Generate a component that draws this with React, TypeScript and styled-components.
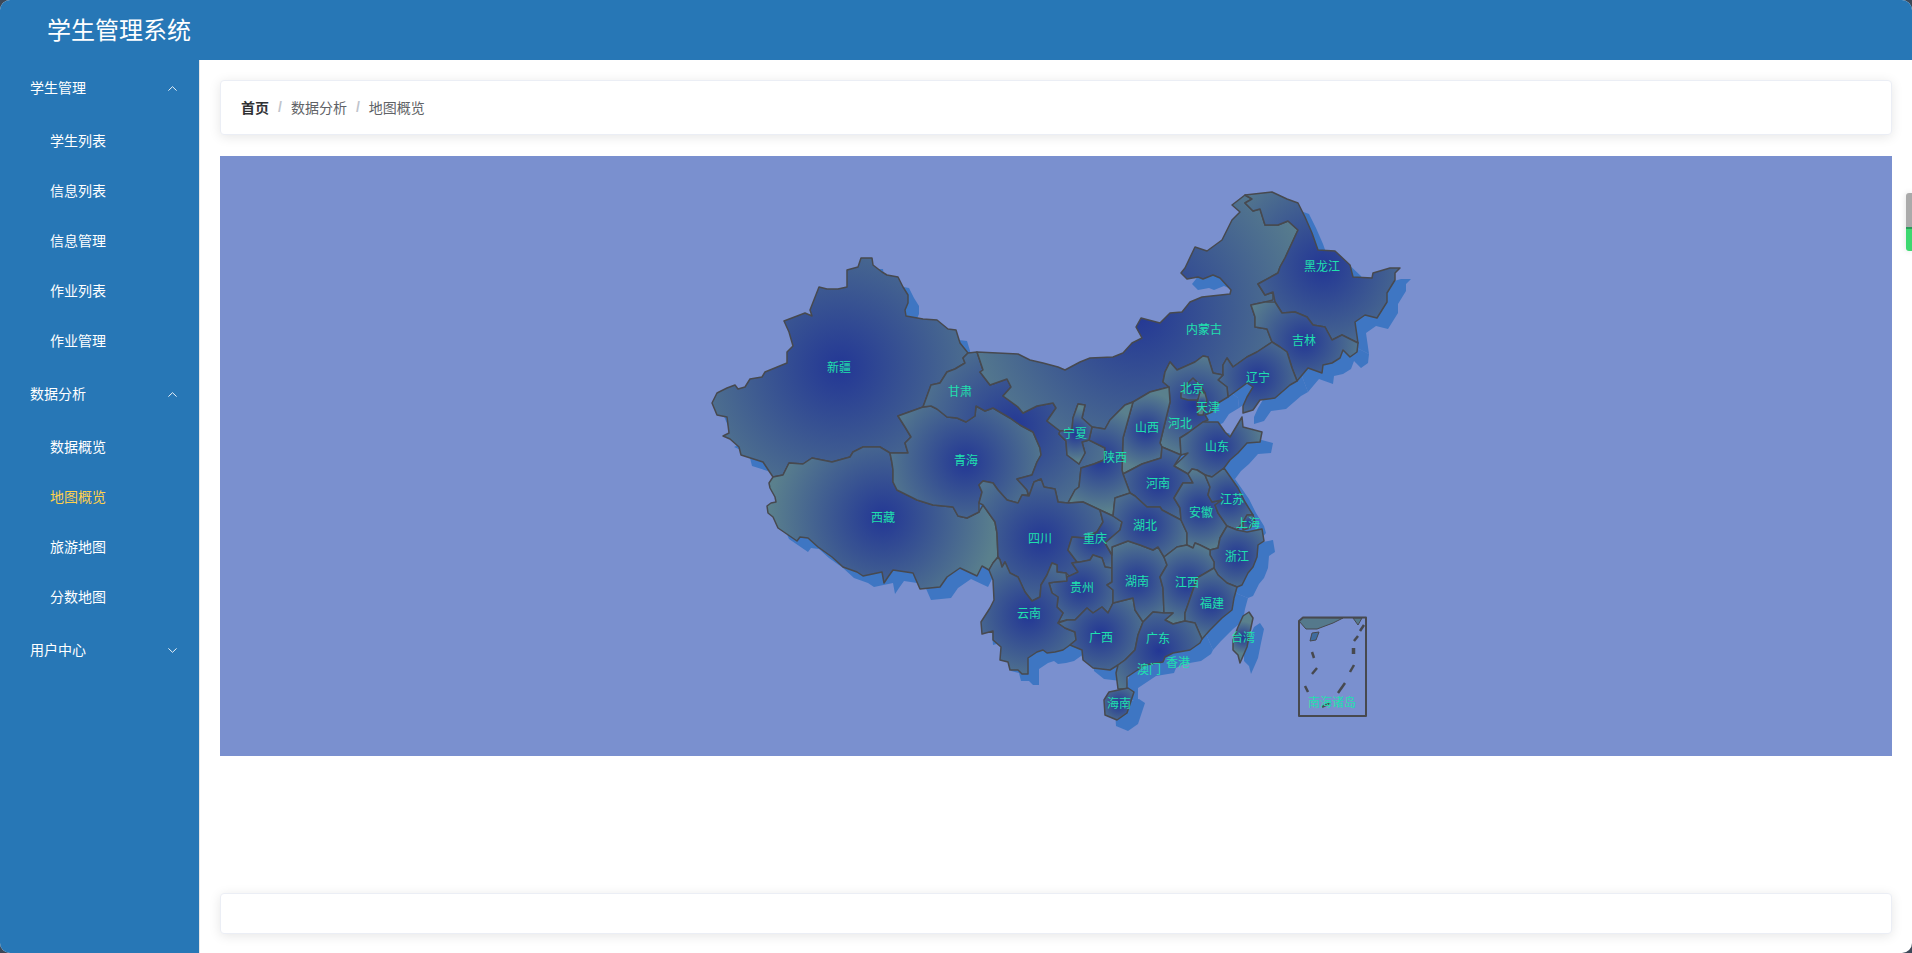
import React, { FC } from 'react'
import styled, { createGlobalStyle } from 'styled-components'

// * ------------------------------------------------------------------------------- data

const provinces: { name: string; points: string }[] = [
  { name: '新疆', points: '861,258 872,258 873,265 882,272 887,275 898,277 903,287 908,295 908,303 905,310 906,316 923,319 937,320 948,329 956,330 960,343 968,353 963,358 965,363 955,369 947,372 940,383 931,385 923,407 898,416 905,427 911,437 905,443 908,453 890,453 880,447 863,447 853,452 850,457 832,462 812,458 803,464 789,463 783,475 773,477 763,462 741,455 739,447 730,439 723,436 729,433 727,417 717,415 712,403 717,393 727,388 735,385 738,389 745,387 750,379 762,377 765,372 787,363 787,352 793,346 789,332 784,321 805,313 812,316 810,310 819,287 827,289 838,289 847,287 847,270 858,267' },
  { name: '西藏', points: '769,483 773,477 783,475 789,463 803,464 812,458 832,462 850,457 853,452 863,447 880,447 890,453 892,463 893,470 893,482 897,490 917,500 933,505 953,507 958,516 967,518 979,512 983,505 995,522 997,533 998,557 993,563 989,570 982,566 977,576 960,568 947,577 940,587 920,589 913,573 893,570 888,577 884,583 882,572 863,576 857,572 843,567 832,557 818,547 808,538 800,537 797,541 778,528 773,517 768,513 767,506 771,503 776,502 775,497 770,488' },
  { name: '青海', points: '890,453 908,453 905,443 911,437 905,427 898,416 923,407 931,406 937,409 947,417 957,418 966,422 975,416 976,406 985,411 993,408 1010,418 1020,425 1033,432 1040,448 1041,455 1037,462 1032,475 1017,479 1027,490 1028,495 1022,495 1018,503 1007,500 998,490 993,483 983,481 979,485 982,492 979,503 979,512 967,518 958,516 953,507 933,505 917,500 897,490 893,482 893,470 892,463' },
  { name: '甘肃', points: '968,353 977,352 983,370 980,372 990,385 1007,379 1011,387 1003,396 1018,407 1023,413 1037,406 1053,403 1056,408 1047,421 1060,431 1059,434 1066,441 1067,455 1079,464 1085,453 1082,442 1089,440 1105,448 1104,460 1094,464 1081,468 1079,487 1075,490 1068,503 1058,502 1055,489 1044,487 1041,479 1034,482 1029,496 1027,490 1017,479 1032,475 1037,462 1041,455 1040,448 1033,432 1020,425 1010,418 993,408 985,411 976,406 975,416 966,422 957,418 947,417 937,409 931,406 923,407 931,385 940,383 947,372 955,369 965,363 963,358' },
  { name: '内蒙古', points: '977,352 1018,354 1030,360 1043,363 1058,367 1065,370 1080,362 1090,358 1113,357 1123,353 1132,343 1142,338 1136,327 1141,318 1160,323 1170,313 1182,312 1190,302 1202,297 1230,294 1231,290 1220,278 1213,275 1203,279 1198,277 1187,279 1181,273 1185,268 1195,247 1207,251 1222,240 1232,220 1240,212 1232,205 1245,195 1252,199 1245,203 1253,211 1260,209 1265,225 1278,225 1288,221 1298,230 1285,258 1280,267 1278,273 1258,284 1265,295 1273,292 1273,300 1265,302 1251,305 1255,317 1255,327 1267,329 1272,342 1257,352 1247,357 1233,367 1227,358 1223,365 1223,375 1213,373 1208,357 1203,356 1195,362 1177,370 1170,362 1165,372 1163,382 1169,387 1150,392 1133,402 1125,405 1110,420 1105,429 1092,427 1082,418 1085,405 1078,404 1073,418 1072,430 1060,431 1047,421 1056,408 1053,403 1037,406 1023,413 1018,407 1003,396 1011,387 1007,379 990,385 980,372 983,370' },
  { name: '黑龙江', points: '1245,195 1272,192 1287,199 1298,203 1305,217 1312,233 1318,250 1335,251 1350,265 1353,277 1372,278 1373,273 1390,268 1400,268 1395,273 1395,280 1387,293 1387,302 1377,318 1365,315 1355,322 1358,343 1342,335 1332,340 1325,327 1313,325 1307,317 1295,312 1282,313 1275,302 1273,292 1265,295 1258,284 1278,273 1280,267 1285,258 1298,230 1288,221 1278,225 1265,225 1260,209 1253,211 1245,203 1252,199' },
  { name: '吉林', points: '1251,305 1265,302 1275,302 1282,313 1295,312 1307,317 1313,325 1325,327 1332,340 1342,335 1358,343 1357,352 1350,357 1343,350 1340,358 1332,363 1323,365 1322,373 1308,368 1297,381 1292,368 1287,352 1280,347 1272,342 1267,329 1255,327 1255,317' },
  { name: '辽宁', points: '1272,342 1280,347 1287,352 1292,368 1297,381 1290,385 1275,398 1260,400 1253,410 1243,413 1243,406 1247,397 1253,387 1247,383 1228,397 1227,387 1218,380 1223,375 1223,365 1227,358 1233,367 1247,357 1257,352' },
  { name: '河北', points: '1165,372 1170,362 1177,370 1195,362 1203,356 1208,357 1213,373 1223,375 1218,380 1227,387 1228,397 1218,403 1212,412 1205,415 1208,420 1203,422 1188,433 1180,438 1181,455 1162,447 1160,443 1170,402 1169,387 1163,382' },
  { name: '北京', points: '1181,392 1188,383 1193,378 1200,385 1205,393 1197,400 1188,400 1181,398' },
  { name: '天津', points: '1200,392 1205,393 1207,400 1203,415 1198,415 1197,403' },
  { name: '山西', points: '1169,387 1170,402 1160,443 1162,447 1161,458 1142,464 1123,474 1122,470 1123,438 1133,402 1150,392' },
  { name: '山东', points: '1188,433 1203,422 1218,422 1225,432 1230,437 1242,417 1243,427 1262,432 1260,442 1247,443 1238,453 1230,460 1224,468 1212,477 1205,475 1197,470 1192,469 1188,474 1174,466 1188,453 1181,455 1180,438' },
  { name: '河南', points: '1123,474 1142,464 1161,458 1162,447 1181,455 1174,466 1188,474 1193,483 1183,483 1174,498 1180,508 1181,520 1162,510 1160,507 1147,507 1135,496 1130,493' },
  { name: '陕西', points: '1133,402 1125,405 1110,420 1105,429 1092,427 1089,440 1105,448 1104,460 1094,464 1081,468 1079,487 1075,490 1068,503 1083,502 1100,510 1113,516 1115,498 1130,493 1123,474 1122,470 1123,438' },
  { name: '宁夏', points: '1078,404 1085,405 1082,418 1092,427 1089,440 1082,442 1085,453 1079,464 1067,455 1066,441 1059,434 1060,431 1072,430 1073,418' },
  { name: '四川', points: '979,503 982,492 979,485 983,481 993,483 998,490 1007,500 1018,503 1022,495 1029,496 1034,482 1041,479 1044,487 1055,489 1058,502 1068,503 1083,502 1100,510 1103,522 1097,532 1085,538 1072,537 1068,550 1077,562 1072,563 1078,572 1070,577 1066,573 1057,572 1057,565 1052,563 1047,575 1041,585 1040,597 1032,601 1025,592 1018,577 1010,573 1005,562 1002,567 1000,560 998,557 997,533 995,522 983,505' },
  { name: '重庆', points: '1100,510 1113,516 1122,522 1120,530 1105,543 1112,555 1112,568 1105,567 1102,558 1093,555 1090,560 1080,562 1077,562 1068,550 1072,537 1085,538 1097,532 1103,522' },
  { name: '贵州', points: '1049,583 1052,593 1058,597 1057,607 1063,613 1058,622 1067,620 1075,620 1087,608 1093,613 1102,607 1108,613 1113,603 1113,590 1107,585 1112,582 1112,568 1105,567 1102,558 1093,555 1090,560 1080,562 1072,563 1078,572 1067,577 1066,581 1055,582' },
  { name: '云南', points: '998,557 1000,560 1002,567 1005,562 1010,573 1018,577 1025,592 1032,601 1040,597 1041,585 1047,575 1052,563 1057,565 1057,572 1066,573 1067,581 1055,582 1049,583 1052,593 1058,597 1057,607 1063,613 1058,623 1065,628 1075,632 1076,640 1070,645 1063,650 1055,652 1047,653 1043,650 1037,652 1028,658 1028,674 1022,674 1018,670 1010,670 1008,662 1000,660 1001,647 993,640 993,631 982,634 981,622 990,608 994,600 993,580 989,570 993,563' },
  { name: '广西', points: '1058,623 1067,620 1075,620 1087,608 1093,613 1102,607 1108,613 1113,603 1125,600 1133,598 1135,610 1143,622 1138,635 1135,650 1125,660 1118,665 1110,670 1093,668 1083,660 1082,650 1070,645 1076,640 1075,632 1065,628' },
  { name: '湖南', points: '1112,555 1112,547 1128,541 1140,545 1153,550 1158,547 1164,557 1167,565 1160,577 1163,588 1164,613 1153,612 1143,622 1135,610 1133,598 1125,600 1113,603 1113,590 1107,585 1112,582 1112,568' },
  { name: '湖北', points: '1113,516 1115,498 1130,493 1135,496 1147,507 1160,507 1162,510 1181,520 1187,533 1187,545 1177,547 1164,557 1158,547 1153,550 1140,545 1128,541 1112,547 1112,555 1105,543 1120,530 1122,522' },
  { name: '安徽', points: '1192,469 1197,470 1205,475 1210,487 1208,495 1212,502 1222,500 1215,505 1218,513 1227,526 1220,538 1218,548 1210,550 1200,545 1195,543 1193,548 1187,545 1187,533 1181,520 1180,508 1174,498 1183,483 1193,483 1188,474' },
  { name: '江苏', points: '1205,475 1212,477 1224,468 1238,488 1245,502 1253,515 1247,515 1243,522 1237,530 1227,526 1218,513 1215,505 1222,500 1212,502 1208,495 1210,487' },
  { name: '上海', points: '1247,515 1253,515 1255,522 1250,528 1243,530 1243,522' },
  { name: '浙江', points: '1227,526 1237,530 1247,532 1262,529 1264,541 1258,545 1257,557 1253,567 1248,573 1242,585 1237,587 1227,583 1218,575 1214,568 1214,562 1210,555 1210,550 1218,548 1220,538' },
  { name: '江西', points: '1164,557 1177,547 1187,545 1193,548 1195,543 1200,545 1210,550 1210,555 1214,562 1214,568 1197,578 1192,593 1185,613 1185,621 1173,624 1165,620 1173,613 1164,613 1163,588 1160,577 1167,565' },
  { name: '福建', points: '1214,568 1218,575 1227,583 1237,587 1234,598 1232,610 1222,618 1210,630 1202,639 1195,623 1185,621 1185,613 1192,593 1197,578' },
  { name: '广东', points: '1143,622 1153,612 1164,613 1173,613 1165,620 1173,624 1185,621 1195,623 1202,639 1200,643 1190,650 1173,653 1165,657 1163,662 1145,665 1127,677 1127,689 1118,689 1116,673 1118,665 1125,660 1135,650 1138,635' },
  { name: '海南', points: '1109,692 1128,688 1134,692 1127,713 1117,720 1105,715 1104,700' },
  { name: '台湾', points: '1249,612 1253,618 1250,632 1247,647 1240,663 1238,655 1233,650 1233,640 1238,627 1243,616' },
]

const labels: [string, number, number][] = [
  ['新疆', 839, 366.5], ['甘肃', 960, 390.5], ['青海', 966, 459.5], ['宁夏', 1075, 432.5],
  ['西藏', 883, 516.5], ['四川', 1040, 537.5], ['重庆', 1095, 537.5], ['贵州', 1082, 586.5],
  ['云南', 1029, 612.5], ['广西', 1101, 636.5], ['海南', 1119, 702.5], ['陕西', 1115, 456.5],
  ['黑龙江', 1322, 265.5], ['内蒙古', 1204, 328.5], ['吉林', 1304, 339.5], ['辽宁', 1258, 376.5],
  ['北京', 1192, 387.5], ['天津', 1208, 406.5], ['河北', 1180, 422.5], ['山西', 1147, 426.5],
  ['山东', 1217, 445.5], ['河南', 1158, 482.5], ['江苏', 1232, 498.5], ['安徽', 1201, 511.5],
  ['上海', 1248, 522.5], ['湖北', 1145, 524.5], ['浙江', 1237, 555.5], ['湖南', 1137, 580.5],
  ['江西', 1187, 581.5], ['福建', 1212, 602.5], ['广东', 1158, 637.5], ['香港', 1178, 661.5],
  ['澳门', 1149, 668.5], ['台湾', 1243, 636.5], ['南海诸岛', 1332, 701.5],
]

const islandDashes: [number, number, number, number, number][] = [
  [1312, 652, 1314, 658, 2.5],
  [1312, 674, 1317, 668, 2.5],
  [1305, 686, 1308, 692, 2.5],
  [1338, 693, 1345, 683, 2.5],
  [1350, 672, 1354, 665, 2.5],
  [1353.5, 648, 1353.5, 654, 3.5],
  [1354, 641, 1358, 636, 2.5],
  [1360, 631, 1364, 625, 2.5],
  [1322, 707, 1330, 703, 2.5],
]

const menu = [
  { title: '学生管理', open: true, items: ['学生列表', '信息列表', '信息管理', '作业列表', '作业管理'] },
  { title: '数据分析', open: true, items: ['数据概览', '地图概览', '旅游地图', '分数地图'] },
  { title: '用户中心', open: false, items: [] as string[] },
]

const ACTIVE_ITEM = '地图概览'

// * ------------------------------------------------------------------------------- style

const GlobalStyle = createGlobalStyle`
  html, body {
    margin: 0;
    height: 100%;
    overflow: hidden;
    background: #3c4858;
    font-family: "Noto Sans CJK SC", "Liberation Sans", sans-serif;
  }
`

const Shell = styled.div`
  position: relative;
  height: 953px;
  border-radius: 10px;
  overflow: hidden;
  background: #fff;
  display: flex;
  flex-direction: column;
`

const Header = styled.header`
  height: 60px;
  flex: none;
  background: #2777b6;
  padding-left: 47px;
  display: flex;
  align-items: center;
`

const Title = styled.div`
  color: #fff;
  font-size: 24px;
  line-height: 58px;
  margin-bottom: 2px;
`

const Body = styled.div`
  flex: 1;
  min-height: 0;
  display: flex;
`

const Sidebar = styled.aside`
  width: 199px;
  flex: none;
  background: #2777b6;
  border-right: 1px solid #e6e6e6;
`

const GroupTitle = styled.div`
  height: 56px;
  padding: 0 22px 0 30px;
  display: flex;
  align-items: center;
  justify-content: space-between;
  color: #fff;
  font-size: 14px;
  line-height: 54px;
`

const GroupText = styled.span`
  margin-bottom: 2px;
`

const MenuItem = styled.div<{ $active: boolean }>`
  height: 50px;
  line-height: 48px;
  padding-left: 50px;
  font-size: 14px;
  color: ${(p) => (p.$active ? '#ffd04b' : '#fff')};
`

const Main = styled.main`
  flex: 1;
  min-width: 0;
  padding: 20px 20px 19px;
  display: flex;
  flex-direction: column;
`

const Card = styled.div`
  box-sizing: border-box;
  flex: none;
  background: #fff;
  border: 1px solid #ebeef5;
  border-radius: 4px;
  box-shadow: 0 2px 12px 0 rgba(0, 0, 0, 0.1);
`

const CrumbCard = styled(Card)`
  height: 55px;
  padding: 0 20px 2px;
  display: flex;
  align-items: center;
  font-size: 14px;
`

const Crumb = styled.span<{ $first?: boolean }>`
  color: ${(p) => (p.$first ? '#303133' : '#606266')};
  font-weight: ${(p) => (p.$first ? 700 : 400)};
`

const Separator = styled.span`
  margin: 0 9px;
  color: #c0c4cc;
  font-family: "Liberation Sans", sans-serif;
  font-weight: 700;
`

const MapPanel = styled.div`
  flex: none;
  height: 600px;
  margin-top: 21px;
  background: #7a90cf;
`

const MapSvg = styled.svg`
  display: block;
  width: 100%;
  height: 100%;
`

const MapLabel = styled.text`
  fill: #1fe0ae;
  font-size: 12px;
  text-anchor: middle;
  dominant-baseline: central;
`

const FooterCard = styled(Card)`
  height: 41px;
  margin-top: auto;
`

const ScrollTab = styled.div`
  position: absolute;
  right: 0;
  top: 193px;
  width: 6px;
  height: 58px;
  border-radius: 3px 0 0 3px;
  background: linear-gradient(#aaaaaa 0 58%, #2a9d5b 58% 62%, #3dd870 62% 100%);
  box-shadow: 0 0 6px rgba(0, 0, 0, 0.12);
`

// * ------------------------------------------------------------------------------- map

const gradientOf = (points: string) => {
  const pairs = points.split(' ').map((p) => p.split(',').map(Number))
  const xs = pairs.map((p) => p[0])
  const ys = pairs.map((p) => p[1])
  const [x0, x1, y0, y1] = [Math.min(...xs), Math.max(...xs), Math.min(...ys), Math.max(...ys)]
  return {
    cx: (x0 + x1) / 2,
    cy: (y0 + y1) / 2,
    r: Math.min(x1 - x0, y1 - y0) * 0.8,
  }
}

const ChinaMap: FC = () => {
  return (
    <MapSvg viewBox="220 156 1672 600">
      <defs>
        {provinces.map((item, key) => (
          <radialGradient key={item.name} id={`area-${key}`} gradientUnits="userSpaceOnUse" {...gradientOf(item.points)}>
            <stop offset="0" stopColor="#233795" />
            <stop offset="1" stopColor="#5a808d" />
          </radialGradient>
        ))}
      </defs>
      <g transform="translate(11 11)" fill="#3e76c3">
        {provinces.map((item) => (
          <polygon key={item.name} points={item.points} />
        ))}
      </g>
      <g stroke="#47494f" strokeWidth="1.5" strokeLinejoin="round">
        {provinces.map((item, key) => (
          <polygon key={item.name} points={item.points} fill={`url(#area-${key})`} />
        ))}
      </g>
      <g stroke="#47494f" strokeLinejoin="round">
        <polygon points="1299,621 1303,617.5 1343,618 1333,623 1317,629 1306,629" fill="#55798c" strokeWidth="1" />
        <polygon points="1353,618 1362,618 1358,625" fill="#55798c" strokeWidth="1" />
        <polygon points="1312,633 1319,632 1316,640 1310,641" fill="#3f6c9e" strokeWidth="1" />
        <path d="M1299 716V621L1303 617.5H1366V716Z" fill="none" strokeWidth="2" />
        {islandDashes.map(([x1, y1, x2, y2, width], key) => (
          <line key={key} x1={x1} y1={y1} x2={x2} y2={y2} strokeWidth={width} />
        ))}
      </g>
      {labels.map(([name, x, y]) => (
        <MapLabel key={name} x={x} y={y}>
          {name}
        </MapLabel>
      ))}
    </MapSvg>
  )
}

// * ------------------------------------------------------------------------------- comp

const Chevron: FC<{ open: boolean }> = ({ open }) => (
  <svg width="9" height="5" viewBox="0 0 9 5" fill="none" stroke="#fff" strokeWidth="0.9">
    <path d={open ? 'M0.4 4.6 4.5 0.7l4.1 3.9' : 'M0.4 0.4 4.5 4.3l4.1-3.9'} />
  </svg>
)

export default function App() {
  return (
    <Shell>
      <GlobalStyle />
      <Header>
        <Title>学生管理系统</Title>
      </Header>
      <Body>
        <Sidebar>
          {menu.map((group) => (
            <div key={group.title}>
              <GroupTitle>
                <GroupText>{group.title}</GroupText>
                <Chevron open={group.open} />
              </GroupTitle>
              {group.items.map((item) => (
                <MenuItem key={item} $active={item === ACTIVE_ITEM}>
                  {item}
                </MenuItem>
              ))}
            </div>
          ))}
        </Sidebar>
        <Main>
          <CrumbCard>
            <Crumb $first>首页</Crumb>
            <Separator>/</Separator>
            <Crumb>数据分析</Crumb>
            <Separator>/</Separator>
            <Crumb>地图概览</Crumb>
          </CrumbCard>
          <MapPanel>
            <ChinaMap />
          </MapPanel>
          <FooterCard />
        </Main>
      </Body>
      <ScrollTab />
    </Shell>
  )
}
